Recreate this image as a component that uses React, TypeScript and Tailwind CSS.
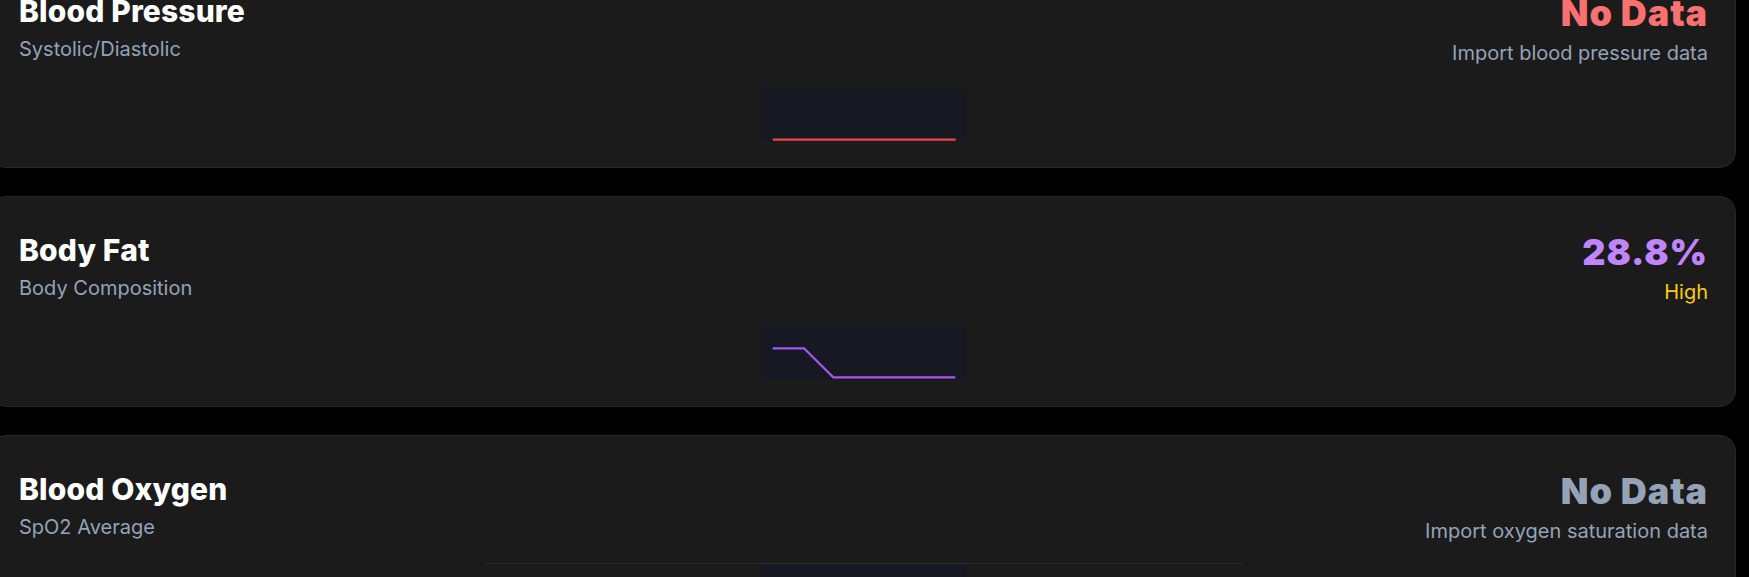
import React from "react";

type Metric = {
  title: string;
  subtitle: string;
  value: string;
  valueClass: string;
  note: string;
  noteClass: string;
  chart: "flat" | "drop" | "empty";
};

const metrics: Metric[] = [
  {
    title: "Blood Pressure",
    subtitle: "Systolic/Diastolic",
    value: "No Data",
    valueClass: "text-[#f87171]",
    note: "Import blood pressure data",
    noteClass: "text-[#94a3b8]",
    chart: "flat",
  },
  {
    title: "Body Fat",
    subtitle: "Body Composition",
    value: "28.8%",
    valueClass: "text-[#c084fc]",
    note: "High",
    noteClass: "text-[#facc15]",
    chart: "drop",
  },
  {
    title: "Blood Oxygen",
    subtitle: "SpO2 Average",
    value: "No Data",
    valueClass: "text-[#94a3b8]",
    note: "Import oxygen saturation data",
    noteClass: "text-[#94a3b8]",
    chart: "empty",
  },
];

function ChartBox({ kind }: { kind: Metric["chart"] }) {
  return (
    <div className="mx-auto h-[54px] w-[207px] rounded-lg bg-[#161922]">
      <svg width="207" height="54" viewBox="0 0 207 54" className="overflow-visible">
        {kind === "flat" && (
          <polyline points="12.7,52.6 195.7,52.6" fill="none" stroke="#ef4444" strokeWidth="2.2" />
        )}
        {kind === "drop" && (
          <polyline
            points="12.7,22.3 44,22.3 73.3,51.3 195.3,51.3"
            fill="none"
            stroke="#a855f7"
            strokeWidth="2.2"
          />
        )}
      </svg>
    </div>
  );
}

function Card({ m }: { m: Metric }) {
  return (
    <div className="h-[211px] shrink-0 rounded-2xl border border-[#272727] bg-[#1b1b1b] pl-[28px] pr-[27px] pt-[35px]">
      <div className="flex items-start justify-between">
        <div className="flex flex-col">
          <div className="text-[30px] leading-[36px] font-extrabold text-white tracking-[0.005em]">{m.title}</div>
          <div className="mt-[6px] text-[20px] leading-[28px] text-[#94a3b8]">{m.subtitle}</div>
        </div>
        <div className="flex flex-col items-end">
          <div className={`text-[36px] leading-[40px] font-black tracking-[0.025em] ${m.valueClass}`}>{m.value}</div>
          <div className={`mt-[6px] text-[20px] leading-[28px] ${m.noteClass}`}>{m.note}</div>
        </div>
      </div>
      {m.chart === "empty" ? (
        <div className="mx-auto mt-[18px] w-[758px] border-t border-[#2a2a2a] pt-[1px]">
          <ChartBox kind="empty" />
        </div>
      ) : (
        <div className="mt-[20px]">
          <ChartBox kind={m.chart} />
        </div>
      )}
    </div>
  );
}

export default function App() {
  return (
    <div
      className="h-[577px] w-[1749px] overflow-hidden bg-black"
      style={{ fontFamily: "Inter, 'Noto Sans', sans-serif" }}
    >
      <div className="ml-[-10px] mt-[-43px] flex w-[1746px] flex-col gap-[28px]">
        {metrics.map((m) => (
          <Card key={m.title} m={m} />
        ))}
      </div>
    </div>
  );
}
